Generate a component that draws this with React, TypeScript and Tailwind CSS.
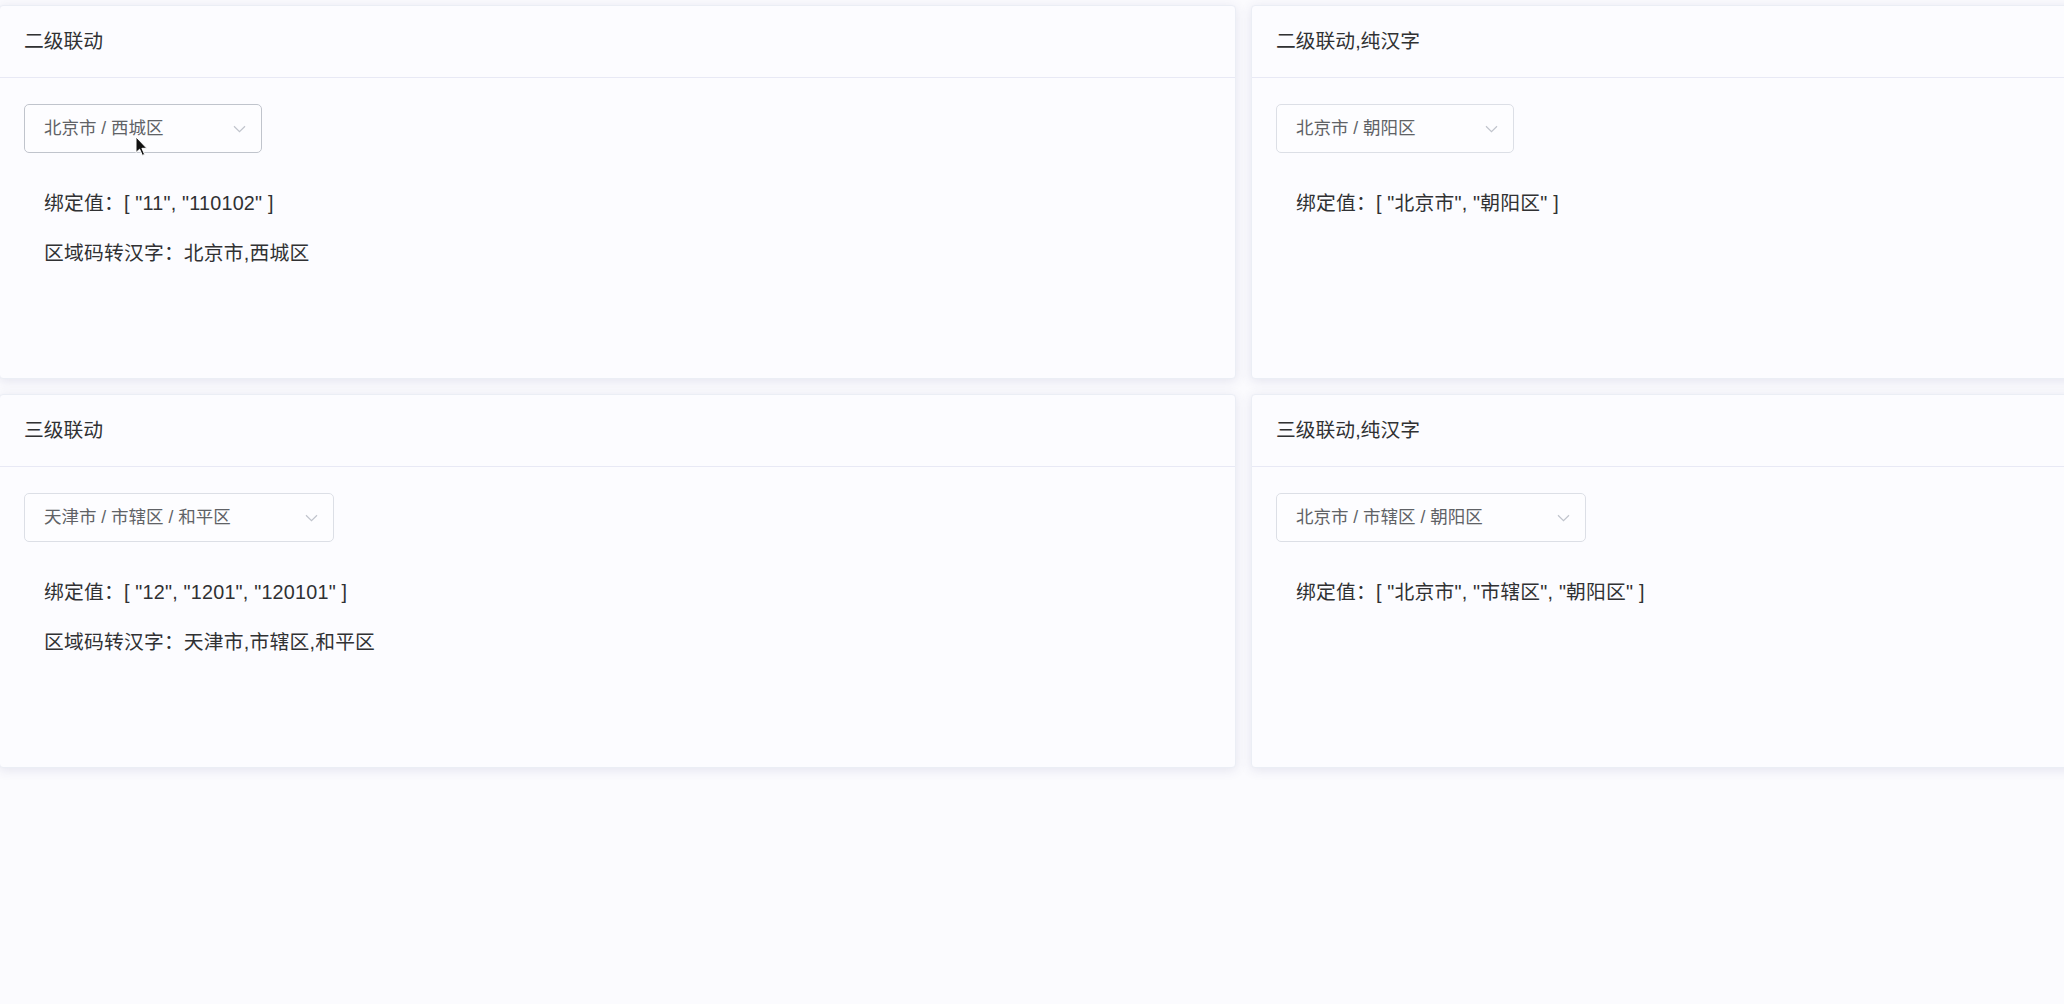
import React from 'react';

type Demo = {
  title: string;
  value: string;
  width: string;
  hovered?: boolean;
  lines: string[];
};

const demos: Demo[] = [
  {
    title: '二级联动',
    value: '北京市 / 西城区',
    width: 'w-[238px]',
    hovered: true,
    lines: ['绑定值：[ "11", "110102" ]', '区域码转汉字：北京市,西城区'],
  },
  {
    title: '二级联动,纯汉字',
    value: '北京市 / 朝阳区',
    width: 'w-[238px]',
    lines: ['绑定值：[ "北京市", "朝阳区" ]'],
  },
  {
    title: '三级联动',
    value: '天津市 / 市辖区 / 和平区',
    width: 'w-[310px]',
    lines: ['绑定值：[ "12", "1201", "120101" ]', '区域码转汉字：天津市,市辖区,和平区'],
  },
  {
    title: '三级联动,纯汉字',
    value: '北京市 / 市辖区 / 朝阳区',
    width: 'w-[310px]',
    lines: ['绑定值：[ "北京市", "市辖区", "朝阳区" ]'],
  },
];

const Chevron = () => (
  <svg width="13" height="8" viewBox="0 0 13 8" fill="none">
    <path d="M1 1.2 L6.5 6.6 L12 1.2" stroke="#c0c4cc" strokeWidth="1.2" />
  </svg>
);

// mouse pointer captured in the screenshot
const Cursor = () => (
  <svg width="14" height="21" viewBox="0 0 14 21" className="absolute left-[111px] top-[32px] pointer-events-none">
    <path d="M1 1 L1 16.5 L4.6 13.2 L7.4 19.4 L9.6 18.4 L6.9 12.3 L11.8 12.3 Z" fill="#111" stroke="#fff" strokeWidth="1" strokeLinejoin="round" />
  </svg>
);

const Card: React.FC<{ demo: Demo }> = ({ demo }) => (
  <div className="h-[374px] bg-[#fcfcff] border border-[#ebeef5] rounded-[4px] shadow-[0_2px_12px_0_rgba(60,60,120,0.12)] overflow-hidden">
    <div className="h-[72px] px-[24px] flex items-center border-b border-[#e8e9f5] text-[19.8px] text-[#303133]">
      {demo.title}
    </div>
    <div className="pt-[26px] px-[24px]">
      <div className="relative">
        <div
          className={`${demo.width} h-[49px] rounded-[5px] border ${demo.hovered ? 'border-[#c0c4cc]' : 'border-[#dcdfe6]'} bg-[#fdfdff] flex items-center justify-between pl-[19px] pr-[15px] text-[17.5px] text-[#606266]`}
        >
          <span>{demo.value}</span>
          <Chevron />
        </div>
        {demo.hovered && <Cursor />}
      </div>
      <div className="mt-[35px] pl-[20px] flex flex-col gap-[20px] text-[19.8px] leading-[30px] text-[#303133] tracking-[0.2px]">
        {demo.lines.map((line) => (
          <div key={line}>{line}</div>
        ))}
      </div>
    </div>
  </div>
);

export default function App() {
  return (
    <div
      className="w-[2064px] h-[1004px] overflow-hidden bg-[#fbfbfe]"
      style={{ fontFamily: '"Liberation Sans", "Noto Sans CJK SC", sans-serif' }}
    >
      <div className="pt-[5px] -ml-px grid grid-cols-[1237px_1237px] gap-x-[15px] gap-y-[15px]">
        {demos.map((d) => (
          <Card key={d.title} demo={d} />
        ))}
      </div>
    </div>
  );
}
